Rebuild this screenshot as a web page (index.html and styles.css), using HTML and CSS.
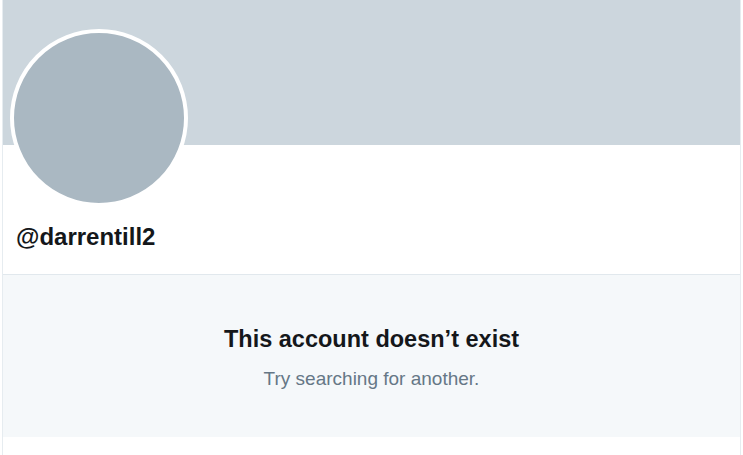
FILE: index.html
```html
<!DOCTYPE html>
<html>
<head>
<meta charset="utf-8">
<link rel="stylesheet" href="styles.css">
</head>
<body>
<div class="page">
  <div class="profile">
    <div class="banner"></div>
    <div class="info">
      <div class="avatar"></div>
      <div class="handle">@darrentill2</div>
    </div>
  </div>
  <div class="empty">
    <div class="title">This account doesn’t exist</div>
    <div class="sub">Try searching for another.</div>
  </div>
  <div class="foot"></div>
</div>
</body>
</html>
```
FILE: styles.css
```css
html, body {
  margin: 0;
  padding: 0;
  background: #ffffff;
}
body {
  font-family: "Liberation Sans", Arial, sans-serif;
  width: 743px;
  height: 455px;
  overflow: hidden;
}
.page {
  margin: 0 2px 0 2px;
  border-left: 1px solid #e6ecf0;
  border-right: 1px solid #e6ecf0;
  height: 455px;
  display: flex;
  flex-direction: column;
}
.profile {
  position: relative;
  border-bottom: 1px solid #e1e8ed;
}
.banner {
  height: 145px;
  background: #ccd6dd;
}
.info {
  height: 129px;
  position: relative;
}
.avatar {
  position: absolute;
  left: 7px;
  top: -116px;
  width: 170px;
  height: 170px;
  border-radius: 50%;
  background: #aab8c2;
  border: 4px solid #ffffff;
}
.handle {
  position: absolute;
  left: 13px;
  top: 78px;
  font-size: 24px;
  font-weight: bold;
  color: #14171a;
}
.empty {
  background: #f5f8fa;
  height: 162px;
  display: flex;
  flex-direction: column;
  align-items: center;
  padding-top: 51px;
  box-sizing: border-box;
}
.title {
  font-size: 23.5px;
  font-weight: bold;
  color: #14171a;
}
.sub {
  margin-top: 15px;
  font-size: 19px;
  color: #657786;
}
.foot {
  flex: 1;
  background: #ffffff;
}
```
